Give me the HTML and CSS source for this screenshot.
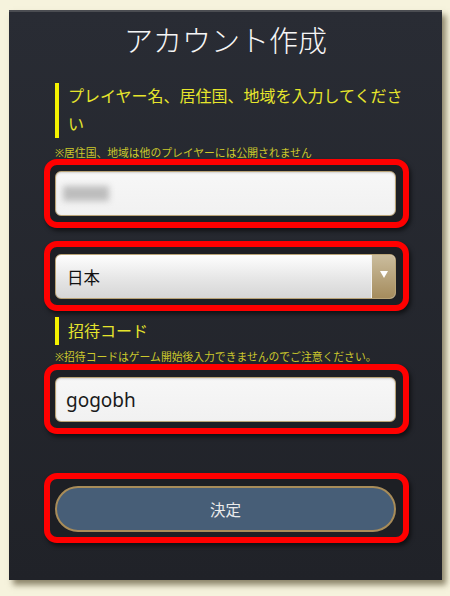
FILE: index.html
```html
<!DOCTYPE html>
<html>
<head>
	<meta charset="UTF-8">
	<title>アカウント作成</title>
	<link rel="stylesheet" href="styles.css">
</head>
<body>

	<div class="panel">
		<h1 class="title">アカウント作成</h1>

		<div class="form">
			<h3 class="heading">プレイヤー名、居住国、地域を入力してください</h3>
			<p class="note">※居住国、地域は他のプレイヤーには公開されません</p>

			<div class="frame">
				<div class="field">
					<!-- player name (hidden) -->
					<span class="blur"></span>
				</div>
			</div>

			<div class="frame frame-select">
				<div class="field select">
					<span class="value">日本</span>
					<span class="arrow"><i></i></span>
				</div>
			</div>

			<h3 class="heading heading-short">招待コード</h3>
			<p class="note note-second">※招待コードはゲーム開始後入力できませんのでご注意ください。</p>

			<div class="frame frame-code">
				<div class="field">
					<span class="value code">gogobh</span>
				</div>
			</div>

			<div class="frame frame-button">
				<div class="button">決定</div>
			</div>
		</div>
	</div>

</body>
</html>
```

FILE: styles.css
```css
* { margin: 0; padding: 0; box-sizing: border-box; }

html, body {
	width: 100%;
	height: 100%;
	background: #f6f3dd;
	font-family: "Noto Sans", "Noto Sans CJK JP", sans-serif;
}

.panel {
	width: 433px;
	height: 570px;
	margin: 10px 0 0 9px;
	background: linear-gradient(#292c34, #202228);
	border-top: 2px solid #4b4d52;
	box-shadow: 4px 5px 6px rgba(70, 60, 30, .6);
}

.title {
	margin-top: 12px;
	text-align: center;
	font-size: 29px;
	font-weight: 300;
	line-height: 33px;
	color: #f6f6f6;
}

.form {
	display: flex;
	flex-direction: column;
	padding: 0 33px 0 35px;
}

.heading {
	margin: 26px 0 0 11px;
	padding-left: 9px;
	border-left: 4px solid #f5f200;
	font-size: 16px;
	font-weight: normal;
	line-height: 27.5px;
	color: #e6e52c;
}
.heading-short {
	margin-top: 6px;
	line-height: 28px;
}

.note {
	margin: 8px 0 0 11px;
	font-size: 10.8px;
	line-height: 13px;
	color: #cbc82c;
	white-space: nowrap;
}
.note-second {
	margin-top: 5px;
}

.frame {
	padding: 6px 7px 6px 5px;
	border: 6px solid #ff0000;
	border-radius: 13px;
	background: #1d1f24;
	box-shadow: 2px 3px 4px rgba(0, 0, 0, .55);
}
.frame-select {
	margin-top: 13px;
	padding-top: 7px;
}
.frame-code {
	margin-top: 1px;
	padding-top: 7px;
}
.frame-button {
	margin-top: 39px;
	padding-top: 7px;
	padding-bottom: 5px;
}

.field {
	display: flex;
	align-items: center;
	height: 45px;
	border: 1px solid #b9a376;
	border-radius: 6px;
	background: linear-gradient(#f7f7f7, #f1f1f1);
	box-shadow: inset 0 1px 2px rgba(0, 0, 0, .15);
	overflow: hidden;
}

.blur {
	display: block;
	width: 46px;
	height: 15px;
	margin-left: 7px;
	background: #bdbdbd;
	filter: blur(3px);
}

.value {
	flex: 1;
	padding-left: 11px;
	font-size: 16.5px;
	color: #111;
}
.code {
	padding-left: 10px;
	font-size: 19px;
	color: #1a1a1a;
}

.select {
	background: linear-gradient(#fefefe, #e4e4e4 60%, #d6d6d6);
	box-shadow: none;
}

.arrow {
	display: flex;
	justify-content: center;
	width: 24px;
	height: 100%;
	padding-top: 16px;
	border-left: 1px solid #f2f2f2;
	background: linear-gradient(#cbbd9e, #a58c5d);
}
.arrow i {
	display: block;
	width: 0;
	height: 0;
	border-left: 4px solid transparent;
	border-right: 4px solid transparent;
	border-top: 7px solid #fff;
}

.button {
	display: flex;
	align-items: center;
	justify-content: center;
	height: 46px;
	border: 2px solid #a88c59;
	border-radius: 23px;
	background: #475e77;
	font-size: 15.5px;
	color: #ebebeb;
}
```
